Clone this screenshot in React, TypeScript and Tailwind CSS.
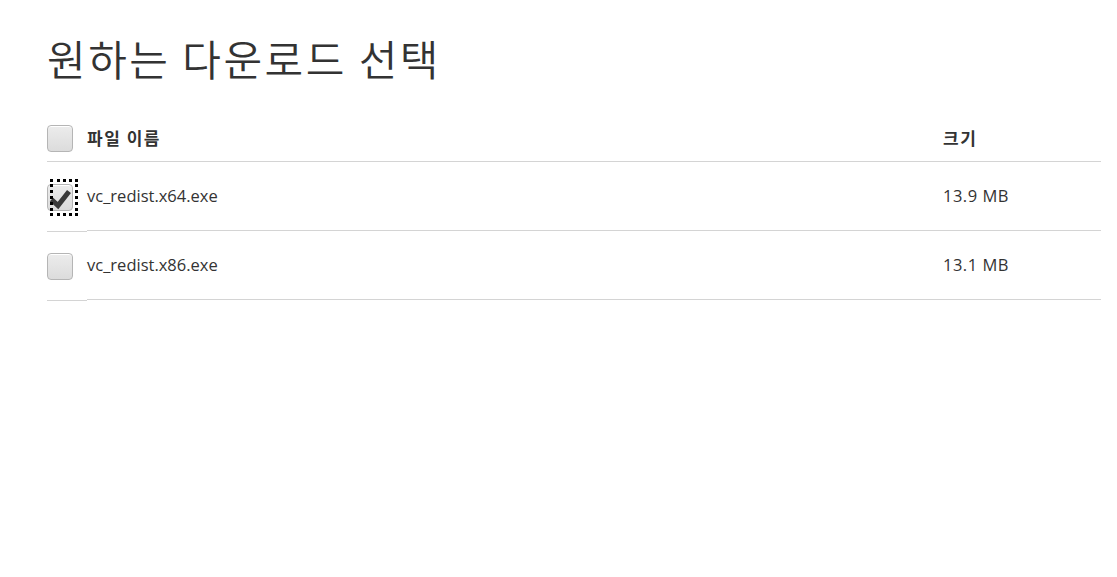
function Box({ checked, focused }: { checked?: boolean; focused?: boolean }) {
    return (
        <span className="relative block w-[26px] h-[27px]">
            <span className="block w-[26px] h-[27px] rounded-[4px] border border-[#b5b5b5] bg-gradient-to-b from-[#ececec] to-[#dcdcdc] shadow-[inset_0_1px_0_#fff]">
                {checked && (
                    <svg viewBox="0 0 26 27" className="w-[26px] h-[27px]">
                        <path d="M3.5 14.5 L10 20.5 L21 6.5" fill="none" stroke="#3a3a3a" strokeWidth="5" strokeLinejoin="miter"/>
                    </svg>
                )}
            </span>
            {focused && (
                <span className="absolute left-[3px] top-[-5px] w-[28px] h-[37px] border-[3px] border-dotted border-black"/>
            )}
        </span>
    );
}

const files = [
    {name: "vc_redist.x64.exe", size: "13.9 MB", checked: true},
    {name: "vc_redist.x86.exe", size: "13.1 MB", checked: false},
];

export default function App() {
    return (
        <div className="w-[1117px] h-[577px] bg-white text-[#333] font-['Segoe_UI','Open_Sans','Noto_Sans_CJK_KR',sans-serif]">
            <div className="pl-[47px] pr-[16px] pt-[28px]">
                <h1 className="text-[42px] leading-[60px] tracking-[2.5px] font-[350] text-[#333] font-['Noto_Sans_CJK_KR',sans-serif]">
                    원하는 다운로드 선택
                </h1>
                <div className="mt-[28px]">
                    <div className="flex items-center h-[46px] border-b border-[#d4d4d4]">
                        <div className="w-[40px]"><Box/></div>
                        <div className="flex-1 font-bold text-[17px] tracking-[1.5px] pb-[2px] font-['Noto_Sans_CJK_KR',sans-serif]">파일 이름</div>
                        <div className="w-[158px] font-bold text-[17px] tracking-[1.5px] pb-[2px] font-['Noto_Sans_CJK_KR',sans-serif]">크기</div>
                    </div>
                    {files.map((f) => (
                        <div key={f.name} className="flex h-[69px]">
                            <div className="w-[40px] flex items-center border-b border-[#d4d4d4] translate-y-[1px]">
                                <Box checked={f.checked} focused={f.checked}/>
                            </div>
                            <div className="flex-1 flex items-center border-b border-[#d4d4d4] text-[16.5px] font-['Open_Sans',sans-serif]">
                                {f.name}
                            </div>
                            <div className="w-[158px] flex items-center border-b border-[#d4d4d4] text-[16.5px] tracking-[0.5px] font-['Open_Sans',sans-serif]">
                                {f.size}
                            </div>
                        </div>
                    ))}
                </div>
            </div>
        </div>
    );
}
